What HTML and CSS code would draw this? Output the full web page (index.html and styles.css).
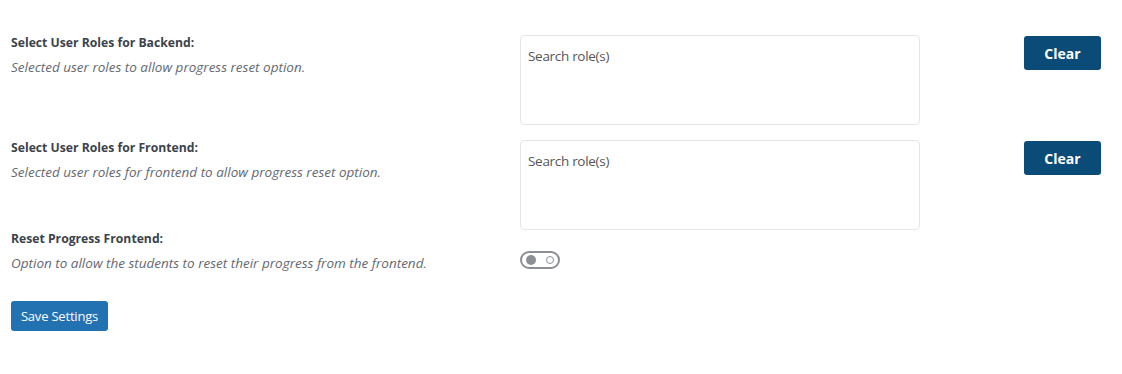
FILE: index.html
```html
<!DOCTYPE html>
<html lang="en">
<head>
    <meta charset="UTF-8">
    <meta name="viewport" content="width=device-width, initial-scale=1.0">
    <title>Reset Progress Settings</title>
    <link rel="stylesheet" href="styles.css">
</head>
<body>

    <div class="settings">

        <div class="row">
            <div class="label-col">
                <div class="label">Select User Roles for Backend:</div>
                <div class="desc">Selected user roles to allow progress reset option.</div>
            </div>
            <div class="field-col">
                <div class="role-box">Search role(s)</div>
            </div>
            <div class="action-col">
                <button type="button" class="clear-btn">Clear</button>
            </div>
        </div>

        <div class="row tight">
            <div class="label-col">
                <div class="label">Select User Roles for Frontend:</div>
                <div class="desc">Selected user roles for frontend to allow progress reset option.</div>
            </div>
            <div class="field-col">
                <div class="role-box">Search role(s)</div>
            </div>
            <div class="action-col">
                <button type="button" class="clear-btn">Clear</button>
            </div>
        </div>

        <div class="row last">
            <div class="label-col">
                <div class="label">Reset Progress Frontend:</div>
                <div class="desc">Option to allow the students to reset their progress from the frontend.</div>
            </div>
            <div class="field-col toggle-col">
                <span class="toggle"><span class="knob"></span><span class="ring"></span></span>
            </div>
            <div class="action-col"></div>
        </div>

        <button type="button" class="save-btn">Save Settings</button>
    </div>

</body>
</html>
```

FILE: styles.css
```css
body {
    margin: 0;
    background-color: #fff;
    font-family: 'Open Sans', 'Noto Sans', sans-serif;
    color: #3c434a;
}

.settings {
    padding: 35px 21px 0 11px;
}

.row {
    display: grid;
    grid-template-columns: 509px 400px 1fr;
    margin-bottom: 15px;
}

.row.tight {
    margin-bottom: 1px;
}

.row.last {
    margin-bottom: 30px;
}

.label {
    font-size: 12.2px;
    font-weight: 700;
    line-height: 16px;
    color: #3c434a;
}

.desc {
    margin-top: 8px;
    font-size: 13.5px;
    font-style: italic;
    line-height: 16px;
    color: #646970;
}

.role-box {
    height: 90px;
    box-sizing: border-box;
    border: 1px solid #e6e6e6;
    border-radius: 4px;
    padding: 11px 7px;
    font-size: 13.5px;
    line-height: 18px;
    color: #555;
    letter-spacing: -0.3px;
}

.action-col {
    display: flex;
    justify-content: flex-end;
    align-items: flex-start;
}

.clear-btn {
    width: 77px;
    height: 34px;
    margin-top: 1px;
    border: none;
    border-radius: 3px;
    background-color: #0a4b78;
    color: #fff;
    font-family: inherit;
    font-size: 14px;
    font-weight: 700;
    cursor: pointer;
}

.toggle-col {
    padding-top: 20px;
}

.toggle {
    display: flex;
    align-items: center;
    justify-content: space-between;
    box-sizing: border-box;
    width: 40px;
    height: 18px;
    padding: 0 4px 0 4px;
    border: 2px solid #8c8f94;
    border-radius: 9px;
}

.knob {
    width: 10px;
    height: 10px;
    border-radius: 50%;
    background-color: #8c8f94;
}

.ring {
    width: 6px;
    height: 6px;
    border: 1.5px solid #8c8f94;
    border-radius: 50%;
}

.save-btn {
    width: 97px;
    height: 30px;
    border: none;
    border-radius: 3px;
    background-color: #2271b1;
    color: #fff;
    font-family: inherit;
    font-size: 13px;
    letter-spacing: -0.2px;
    cursor: pointer;
}
```
